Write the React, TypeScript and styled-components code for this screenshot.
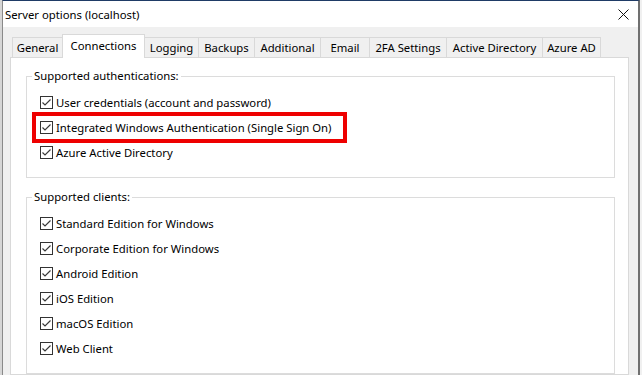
import React from "react";
import styled, { createGlobalStyle } from "styled-components";

const GlobalStyle = createGlobalStyle`
  html, body { margin: 0; padding: 0; background: #ffffff; }
  body { font-family: "Noto Sans", "Open Sans", sans-serif; font-size: 11.3px; color: #000; }
  * { box-sizing: border-box; }
`;

const Screen = styled.div`
  width: 642px;
  height: 375px;
  display: flex;
  overflow: hidden;
  background: #f3f3f3;
`;

const EdgeStrip = styled.div<{ $w: number; $bg: string }>`
  width: ${(p) => p.$w}px;
  flex: none;
  background: ${(p) => p.$bg};
`;

const Window = styled.div`
  width: 638px;
  flex: none;
  display: flex;
  flex-direction: column;
  border-top: 1px solid #1f3b66;
  border-left: 1px solid #8a8a8a;
  border-right: 2px solid #707070;
  background: #f0f0f0;
`;

const TitleBar = styled.div`
  height: 26px;
  flex: none;
  display: flex;
  align-items: center;
  justify-content: space-between;
  padding: 0 9px 0 2px;
  background: #ffffff;
  font-size: 11.3px;
  color: #000;
`;

const CloseIcon = () => (
  <svg width="11" height="11" viewBox="0 0 11 11" style={{ display: "block" }}>
    <path d="M0.5 0.5 L10.5 10.5 M10.5 0.5 L0.5 10.5" stroke="#111" strokeWidth="1" fill="none" />
  </svg>
);

const Body = styled.div`
  flex: 1;
  display: flex;
  flex-direction: column;
  padding: 8px 9px 0 7px;
  min-height: 0;
`;

const TabStrip = styled.div`
  height: 22px;
  flex: none;
  display: flex;
  align-items: flex-end;
  padding-left: 2px;
`;

const Tab = styled.div<{ $w: number; $active?: boolean }>`
  width: ${(p) => p.$w}px;
  flex: none;
  height: ${(p) => (p.$active ? 24 : 20)}px;
  margin-left: -1px;
  margin-bottom: ${(p) => (p.$active ? -1 : 0)}px;
  padding-bottom: ${(p) => (p.$active ? 3 : 0)}px;
  display: flex;
  align-items: center;
  justify-content: center;
  border: 1px solid #d9d9d9;
  border-bottom: none;
  background: ${(p) => (p.$active ? "#ffffff" : "#f0f0f0")};
  position: relative;
  z-index: ${(p) => (p.$active ? 2 : 1)};
  white-space: nowrap;
  color: #000;
  &:first-child { margin-left: 0; }
`;

const TabPage = styled.div`
  flex: 1;
  background: #ffffff;
  border: 1px solid #d9d9d9;
  padding: 10px 13px 0 15px;
`;

const GroupBox = styled.fieldset<{ $gap?: number }>`
  margin: ${(p) => p.$gap ?? 0}px 0 0 0;
  padding: 0;
  border: 1px solid #dcdcdc;
  min-width: 0;
`;

const GroupLegend = styled.legend`
  margin-left: 5px;
  padding: 0 2px;
  line-height: 16px;
  color: #000;
`;

const OptionList = styled.div<{ $top: number; $bottom: number }>`
  display: flex;
  flex-direction: column;
  padding: ${(p) => p.$top}px 0 ${(p) => p.$bottom}px 13px;
`;

const OptionRow = styled.div`
  height: 25px;
  display: flex;
  align-items: center;
  gap: 3px;
  position: relative;
  white-space: nowrap;
`;

const Highlight = styled.div`
  position: absolute;
  left: -8px;
  top: -3px;
  width: 315px;
  height: 31px;
  border: 4px solid #ee0000;
  pointer-events: none;
`;

const CheckBox = () => (
  <svg width="13" height="13" viewBox="0 0 13 13" style={{ display: "block", flex: "none" }}>
    <rect x="0.5" y="0.5" width="12" height="12" fill="#fff" stroke="#333" strokeWidth="1" />
    <path d="M2.5 6.5 L5 9 L10.5 3.5" stroke="#3a3a3a" strokeWidth="1.2" fill="none" />
  </svg>
);

const tabs = [
  { label: "General", w: 51 },
  { label: "Connections", w: 83, active: true },
  { label: "Logging", w: 55 },
  { label: "Backups", w: 57 },
  { label: "Additional", w: 67 },
  { label: "Email", w: 50 },
  { label: "2FA Settings", w: 78 },
  { label: "Active Directory", w: 97 },
  { label: "Azure AD", w: 59 },
];

const auth = [
  { label: "User credentials (account and password)" },
  { label: "Integrated Windows Authentication (Single Sign On)", highlight: true },
  { label: "Azure Active Directory" },
];

const clients = [
  "Standard Edition for Windows",
  "Corporate Edition for Windows",
  "Android Edition",
  "iOS Edition",
  "macOS Edition",
  "Web Client",
];

export default function App() {
  return (
    <>
      <GlobalStyle />
      <Screen>
        <EdgeStrip $w={2} $bg="#d6d6d6" />
        <Window>
          <TitleBar>
            <span>Server options (localhost)</span>
            <CloseIcon />
          </TitleBar>
          <Body>
            <TabStrip>
              {tabs.map((t) => (
                <Tab key={t.label} $w={t.w} $active={t.active}>
                  {t.label}
                </Tab>
              ))}
            </TabStrip>
            <TabPage>
              <GroupBox>
                <GroupLegend>Supported authentications:</GroupLegend>
                <OptionList $top={6} $bottom={12}>
                  {auth.map((a) => (
                    <OptionRow key={a.label}>
                      <CheckBox />
                      <span>{a.label}</span>
                      {a.highlight && <Highlight />}
                    </OptionRow>
                  ))}
                </OptionList>
              </GroupBox>
              <GroupBox $gap={11}>
                <GroupLegend>Supported clients:</GroupLegend>
                <OptionList $top={6} $bottom={12}>
                  {clients.map((c) => (
                    <OptionRow key={c}>
                      <CheckBox />
                      <span>{c}</span>
                    </OptionRow>
                  ))}
                </OptionList>
              </GroupBox>
            </TabPage>
          </Body>
        </Window>
        <EdgeStrip $w={2} $bg="#f0f0f0" />
      </Screen>
    </>
  );
}
